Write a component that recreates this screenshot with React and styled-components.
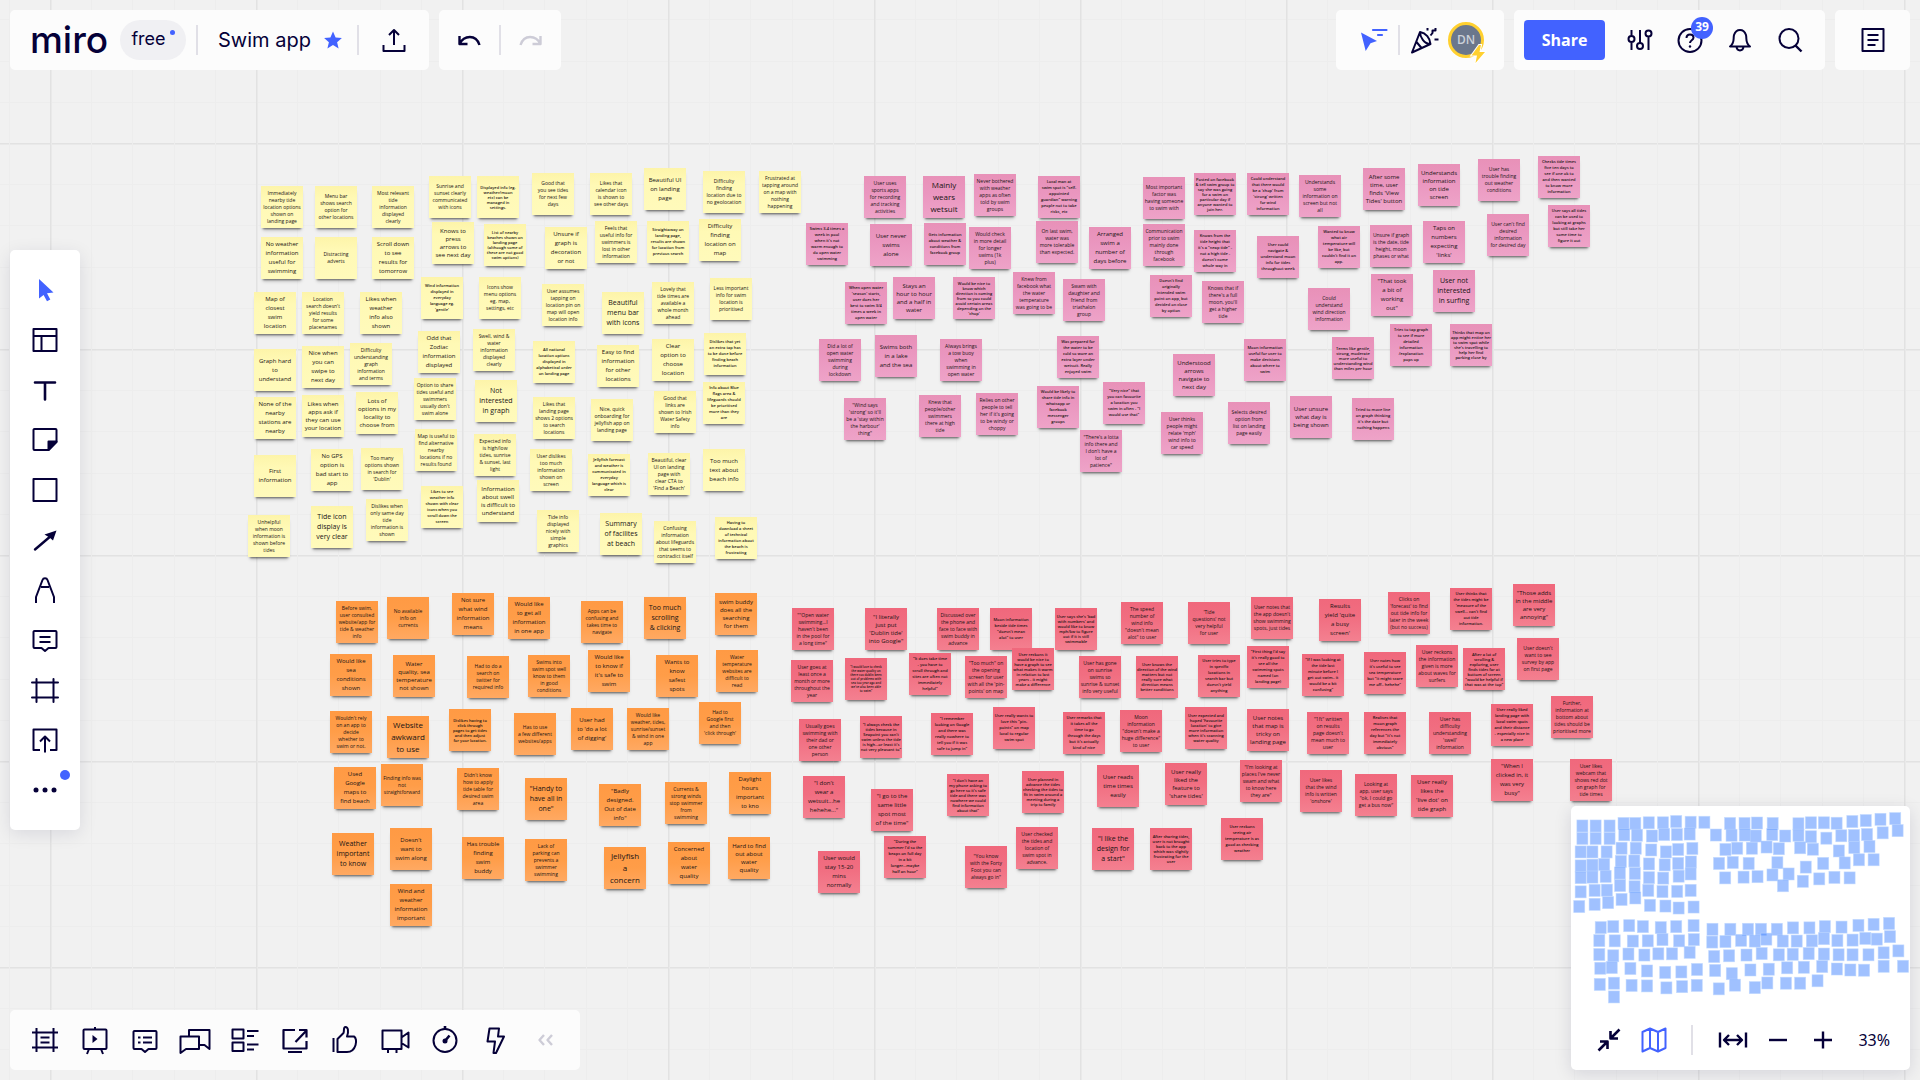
import React from "react";
import styled, { createGlobalStyle, css } from "styled-components";

const INK = "#050038";
const BLUE = "#4262ff";

const GlobalStyle = createGlobalStyle`
  * { box-sizing: border-box; }
  body {
    margin: 0;
    overflow: hidden;
    background: #f1f1f1;
    color: ${INK};
    font-family: "Open Sans", "Noto Sans", sans-serif;
  }
`;

/* ---------- board data: [x, y, text size, lines] ---------- */

const YELLOW = [
  [261, 186, "d", "Immediately|nearby tide|location options|shown on|landing page"],
  [315, 186, "d", "Menu bar|shows search|option for|other locations"],
  [372, 186, "d", "Most relevant|tide|information|displayed|clearly"],
  [429, 176, "d", "Sunrise and|sunset clearly|communicated|with icons"],
  [477, 176, "b", "Displayed info (eg.|weather/moon|etc) can be|managed in|settings."],
  [532, 173, "d", "Good that|you see tides|for next few|days"],
  [590, 173, "d", "Likes that|calendar icon|is shown to|see other days"],
  [644, 168, "f", "Beautiful UI|on landing|page"],
  [703, 171, "d", "Difficulty|finding|location due to|no geolocation"],
  [759, 171, "d", "Frustrated at|tapping around|on a map with|nothing|happening"],
  [261, 237, "f", "No weather|information|useful for|swimming"],
  [315, 237, "d", "Distracting|adverts"],
  [372, 237, "f", "Scroll down|to see|results for|tomorrow"],
  [432, 222, "e", "Knows to|press|arrows to|see next day"],
  [484, 224, "b", "List of nearby|beaches shown on|landing page|(although some of|these are not good|swim options)"],
  [545, 227, "f", "Unsure if|graph is|decoration|or not"],
  [595, 221, "d", "Feels that|useful info for|swimmers is|lost in other|information"],
  [647, 221, "c", "Straightaway on|landing page,|results are shown|for location from|previous search"],
  [699, 219, "f", "Difficulty|finding|location on|map"],
  [254, 292, "f", "Map of|closest|swim|location"],
  [302, 292, "d", "Location|search doesn't|yield results|for some|placenames"],
  [360, 292, "f", "Likes when|weather|info also|shown"],
  [421, 277, "c", "Wind information|displayed in|everyday|language eg.|'gentle'"],
  [479, 277, "d", "Icons show|menu options|eg. map,|settings, etc"],
  [542, 284, "d", "User assumes|tapping on|location pin on|map will open|location info"],
  [602, 292, "g", "Beautiful|menu bar|with icons"],
  [652, 282, "d", "Lovely that|tide times are|available a|whole month|ahead"],
  [710, 278, "d", "Less important|info for swim|location is|prioritised"],
  [254, 349, "f", "Graph hard|to|understand"],
  [302, 346, "f", "Nice when|you can|swipe to|next day"],
  [350, 343, "d", "Difficulty|understanding|graph|information|and terms"],
  [418, 331, "f", "Odd that|Zodiac|information|displayed"],
  [473, 329, "d", "Swell, wind &|water|information|displayed|clearly"],
  [533, 341, "c", "All national|location options|displayed in|alphabetical order|on landing page"],
  [597, 345, "f", "Easy to find|information|for other|locations"],
  [652, 339, "f", "Clear|option to|choose|location"],
  [704, 333, "c", "Dislikes that yet|an extra tap has|to be done before|finding beach|information"],
  [254, 397, "f", "None of the|nearby|stations are|nearby"],
  [302, 395, "e", "Likes when|apps ask if|they can use|your location"],
  [356, 392, "e", "Lots of|options in my|locality to|choose from"],
  [414, 378, "d", "Option to share|tides useful and|swimmers|usually don't|swim alone"],
  [475, 380, "g", "Not|interested|in graph"],
  [533, 397, "d", "Likes that|landing page|shows 2 options|to search|locations"],
  [591, 399, "d", "Nice, quick|onboarding for|jellyfish app on|landing page"],
  [654, 391, "d", "Good that|links are|shown to Irish|Water Safety|info"],
  [703, 382, "c", "Info about Blue|flags area &|lifeguards should|be prioritised|more than they|are"],
  [254, 455, "f", "First|information"],
  [311, 449, "f", "No GPS|option is|bad start to|app"],
  [361, 448, "d", "Too many|options shown|in search for|'Dublin'"],
  [415, 429, "d", "Map is useful to|find alternative|nearby|locations if no|results found"],
  [474, 434, "d", "Expected info|is high/low|tides, sunrise|& sunset, last|light"],
  [530, 449, "d", "User dislikes|too much|information|shown on|screen"],
  [588, 454, "c", "Jellyfish forecast|and weather is|communicated in|everyday|language which is|clear"],
  [648, 453, "d", "Beautiful, clear|UI on landing|page with|clear CTA to|'Find a Beach'"],
  [703, 449, "f", "Too much|text about|beach info"],
  [248, 515, "d", "Unhelpful|when moon|information is|shown before|tides"],
  [311, 506, "g", "Tide icon|display is|very clear"],
  [366, 499, "d", "Dislikes when|only same day|tide|information is|shown"],
  [421, 486, "c", "Likes to see|weather info|shown with clear|icons when you|scroll down the|screen"],
  [477, 480, "e", "Information|about swell|is difficult to|understand"],
  [537, 510, "d", "Tide info|displayed|nicely with|simple|graphics"],
  [600, 513, "g", "Summary|of facilites|at beach"],
  [654, 521, "d", "Confusing|information|about lifeguards|that seems to|contradict itself"],
  [715, 517, "c", "Having to|download a sheet|of technical|information about|the beach is|frustrating"],
];

const PINK = [
  [864, 176, "d", "User uses|sports apps|for recording|and tracking|activities"],
  [923, 176, "h", "Mainly|wears|wetsuit"],
  [974, 174, "d", "Never bothered|with weather|apps as often|told by swim|groups"],
  [1038, 176, "c", "Local man at|swim spot is \"self-|appointed|guardian\" warning|people not to take|risks, etc"],
  [1143, 177, "d", "Most important|factor was|having someone|to swim with"],
  [1194, 173, "b", "Posted on facebook|& tell swim group to|say she was going|for a swim on|particular day if|anyone wanted to|join her."],
  [1247, 173, "c", "Could understand|that there would|be a 'chop' from|'strong' written|for wind|information"],
  [1299, 175, "d", "Understands|some|information on|screen but not|all"],
  [1363, 168, "e", "After some|time, user|finds 'View|Tides' button"],
  [1418, 164, "e", "Understands|information|on tide|screen"],
  [1478, 159, "d", "User has|trouble finding|out weather|conditions"],
  [1538, 156, "c", "Checks tide times|five ten days to|see if one ok to|and then wanted|to know more|information"],
  [806, 223, "c", "Swims 3-4 times a|week in pool|when it's not|warm enough to|do open water|swimming"],
  [870, 224, "f", "User never|swims|alone"],
  [924, 223, "c", "Gets information|about weather &|conditions from|facebook group"],
  [969, 227, "d", "Would check|in more detail|for longer|swims (1k|plus)"],
  [1036, 221, "d", "On last swim,|water was|more tolerable|than expected."],
  [1089, 227, "f", "Arranged|swim a|number of|days before"],
  [1143, 224, "d", "Communication|prior to swim|mainly done|through|facebook"],
  [1194, 230, "c", "Knows from the|tide height that|it's a \"neap tide\" -|not a high tide -|doesn't come|whole way in"],
  [1257, 236, "c", "User could|navigate &|understand moon|info for tides|throughout week"],
  [1318, 226, "c", "Wanted to know|what air|temperature will|be like, but|couldn't find it on|app."],
  [1370, 225, "d", "Unsure if graph|is the date, tide|height, moon|phases or what"],
  [1423, 221, "f", "Taps on|numbers|expecting|'links'"],
  [1487, 214, "d", "User can't find|desired|information|for desired day"],
  [1548, 205, "c", "User says all tides|can be used to|looking at graphs|but still take her|some time to|figure it out"],
  [845, 282, "c", "When open water|'season' starts,|user does her|best to swim 3/4|times a week in|open water"],
  [893, 277, "e", "Stays an|hour to hour|and a half in|water"],
  [953, 277, "b", "Would be nice to|know which|direction is coming|from so you could|avoid certain areas|depending on the|'chop'"],
  [1013, 272, "d", "Knew from|facebook what|the water|temperature|was going to be"],
  [1063, 279, "d", "Swam with|daughter and|friend from|triathalon|group"],
  [1150, 275, "c", "Doesn't find|originally|intended swim|point on app, but|decided on close|by option"],
  [1202, 281, "d", "Knows that if|there's a full|moon, you'll|get a higher|tide"],
  [1308, 288, "d", "Could|understand|wind direction|information"],
  [1371, 274, "f", "\"That took|a bit of|working|out\""],
  [1433, 270, "g", "User not|interested|in surfing"],
  [819, 339, "d", "Did a lot of|open water|swimming|during|lockdown"],
  [875, 335, "f", "Swims both|in a lake|and the sea"],
  [940, 339, "d", "Always brings|a tow buoy|when|swimming in|open water"],
  [1057, 336, "c", "Was prepared for|the water to be|cold so wore an|extra layer under|wetsuit. Really|enjoyed swim"],
  [1173, 354, "e", "Understood|arrows|navigate to|next day"],
  [1244, 339, "c", "Moon information|useful for user to|make decisions|about where to|swim"],
  [1332, 337, "b", "Terms like gentle,|strong, moderate|more useful to|understanding wind|than miles per hour"],
  [1390, 324, "c", "Tries to tap graph|to see if more|detailed|information|/explanation|pops up"],
  [1450, 324, "b", "Thinks that map on|app might entice her|to swim spot while|she's travelling to|help her find|parking close by"],
  [844, 398, "d", "\"Wind says|'strong' so it'll|be a 'stay within|the harbour'|thing\""],
  [919, 395, "d", "Knew that|people/other|swimmers|there at high|tide"],
  [976, 393, "d", "Relies on other|people to tell|her if it's going|to be windy or|choppy"],
  [1037, 386, "c", "Would be likely to|share tide info in|whatsapp or|facebook|messenger|groups"],
  [1103, 382, "c", "\"Very nice\" that|you can favourite|a location you|swim in often - \"I|would use that\""],
  [1080, 430, "d", "\"There's a lotta|info there and|I don't have a|lot of|patience\""],
  [1161, 412, "d", "User thinks|people might|relate 'mph'|wind info to|car speed"],
  [1228, 402, "d", "Selects desired|option from|list on landing|page easily"],
  [1290, 396, "e", "User unsure|what day is|being shown"],
  [1352, 398, "c", "Tried to move line|on graph thinking|it's the date but|nothing happens"],
];

const ORANGE = [
  [336, 601, "d", "Before swim,|user consulted|website/app for|tide & weather|info"],
  [387, 597, "d", "No available|info on|currents"],
  [452, 593, "f", "Not sure|what wind|information|means"],
  [508, 597, "f", "Would like|to get all|information|in one app"],
  [581, 601, "d", "Apps can be|confusing and|takes time to|navigate"],
  [644, 597, "g", "Too much|scrolling|& clicking"],
  [715, 593, "e", "swim buddy|does all the|searching|for them"],
  [330, 654, "f", "Would like|sea|conditions|shown"],
  [393, 655, "e", "Water|quality, sea|temperature|not shown"],
  [467, 656, "d", "Had to do a|search on|twitter for|required info"],
  [528, 655, "d", "Swims into|swim spot well|know to them|in good|conditions"],
  [588, 650, "f", "Would like|to know if|it's safe to|swim"],
  [656, 655, "f", "Wants to|know|safest|spots"],
  [716, 650, "d", "Water|temperature|websites are|difficult to|read"],
  [330, 711, "d", "Wouldn't rely|on an app to|decide|whether to|swim or not."],
  [387, 716, "h", "Website|awkward|to use"],
  [449, 709, "b", "Dislikes having to|click through|pages to get tides|and then adjust|for your location."],
  [514, 713, "d", "Has to use|a few different|websites/apps"],
  [571, 708, "f", "User had|to 'do a lot|of digging'"],
  [627, 708, "d", "Would like|weather, tides,|sunrise/sunset|& wind in one|app"],
  [699, 702, "d", "Had to|Google first|and then|'click through'"],
  [334, 767, "f", "Used|Google|maps to|find beach"],
  [381, 764, "d", "Finding info was|not|straightforward"],
  [457, 768, "d", "Didn't know|how to apply|tide table for|desired swim|area"],
  [525, 778, "g", "\"Handy to|have all in|one\""],
  [599, 784, "f", "\"Badly|designed.|Out of date|info\""],
  [665, 782, "d", "Currents &|strong winds|stop swimmer|from|swimming"],
  [729, 772, "f", "Daylight|hours|important|to kno"],
  [332, 833, "g", "Weather|important|to know"],
  [390, 828, "f", "Doesn't|want to|swim along"],
  [462, 837, "f", "Has trouble|finding|swim|buddy"],
  [525, 839, "d", "Lack of|parking can|prevents a|swimmer|swimming"],
  [604, 847, "h", "Jellyfish|a|concern"],
  [668, 842, "f", "Concerned|about|water|quality"],
  [728, 837, "e", "Hard to find|out about|water|quality"],
  [390, 884, "f", "Wind and|weather|information|important"],
];

const RED = [
  [792, 608, "d", "\"\"Open water|swimming...I|haven't been|in the pool for|a long time\""],
  [865, 608, "e", "\"I literally|just put|'Dublin tide'|into Google\""],
  [937, 608, "d", "Discussed over|the phone and|face to face with|swim buddy in|advance"],
  [990, 608, "c", "Moon information|beside tide times|\"doesn't mean|alot\" to user"],
  [1055, 608, "b", "User says she's 'bad|with numbers' and|would like to know|mph/kw to figure|out if it is still|swimmable"],
  [1121, 602, "d", "The speed|number of|wind info|\"doesn't mean|alot\" to user"],
  [1188, 602, "d", "'Tide|questions' not|very helpful|for user"],
  [1251, 597, "d", "User notes that|the app doesn't|show swimming|spots, just tides"],
  [1319, 599, "f", "Results|yield 'quite|a busy|screen'"],
  [1388, 592, "d", "Clicks on|'forecast' to find|out tide info for|later in the week|(but no success)"],
  [1450, 588, "c", "User thinks that|the tides might be|'measure of the|swell… can't find|out tide|information."],
  [1513, 584, "e", "\"Those adds|in the middle|are very|annoying\""],
  [791, 660, "d", "User goes at|least once a|month or more|throughout the|year"],
  [845, 658, "a", "\"I would love to check|the water quality on|there cos dublin been|out of problems with|sea too year ago and|we've also been able|to swim\""],
  [909, 653, "c", "\"It does take time|- you have to|scroll through and|sites are often not|immediately|helpful\""],
  [965, 656, "d", "\"Too much\" on|the opening|screen for user|with all the 'pin-|points' on map"],
  [1012, 648, "b", "User reckons it|would be nice to|have a graph to see|what makes it warm|in relation to last|years - it might|make a difference"],
  [1079, 656, "d", "User has gone|on sunrise|swims so|sunrise & sunset|info very useful"],
  [1136, 656, "b", "User knows the|direction of the wind|matters but not|really sure what|direction means|better conditions"],
  [1198, 655, "c", "User tries to type|in specific|locations in|search bar but|doesn't yield|anything"],
  [1247, 646, "c", "\"First thing I'd say|it's really good to|see all the|swimming spots|named (on|landing page)"],
  [1302, 654, "c", "\"If I was looking at|the tide last|minute before I|get out swim.. it|would be a bit|confusing\""],
  [1364, 652, "c", "User notes how|it's useful to see|sea temperature|but \"it might scare|me off.. hehehe\""],
  [1416, 645, "d", "User reckons|the information|given is more|about waves for|surfers"],
  [1463, 648, "b", "After a lot of|scrolling &|exploring, user|finds tides far at|bottom of screen|\"would be helpful if|that was at the top\""],
  [1517, 638, "d", "User doesn't|want to see|survey by app|on first page"],
  [799, 719, "d", "Usually goes|swimming with|their dad or|one other|person"],
  [860, 716, "b", "\"I always check the|tides because in|Seapoint you can't|swim unless the tide|is high…or least it's|not very pleasant to\""],
  [931, 713, "c", "\"I remember|looking on Google|and there was|really nowhere to|tell you if it was|safe to jump in\""],
  [993, 707, "c", "User really wants to|love this \"pin-|points\" on map|local to regular|swim spot"],
  [1063, 712, "c", "User remarks that|it takes all the|time to go|through the days|but it's actually|kind of nice"],
  [1120, 710, "d", "Moon|information|\"doesn't make a|huge difference\"|to user"],
  [1185, 707, "b", "User expected and|hoped 'Favourite|location' to give|more information|when it's scanning|water quality"],
  [1247, 709, "e", "User notes|that map is|tricky on|landing page"],
  [1307, 712, "d", "\"1ft\" written|on results|page doesn't|mean much to|user"],
  [1364, 712, "c", "Realises that|moon graph|references the|day but \"it's not|immediately|obvious\""],
  [1429, 712, "d", "User has|difficulty|understanding|'swell'|information"],
  [1491, 704, "c", "User really liked|landing page with|local swim spots|and their distance|- especially nice in|a new place"],
  [1551, 696, "d", "Further,|information at|bottom about|tides should be|prioritised more"],
  [803, 776, "f", "\"I don't|wear a|wetsuit...he|hehehe...\""],
  [871, 789, "f", "\"I go to the|same little|spot most|of the time\""],
  [947, 774, "b", "\"I don't have an|my phone asking to|go here so it's safe|tide and there was|nowhere we could|find information|about that\""],
  [1022, 771, "b", "User planned in|advance the tides|checking the tides to|fit in swim around a|meeting during a|trip to family"],
  [1097, 765, "f", "User reads|time times|easily"],
  [1165, 763, "e", "User really|liked the|feature to|'share tides'"],
  [1240, 760, "d", "\"I'm looking at|places I've never|swam and what|to know here|they are\""],
  [1300, 770, "d", "User likes|that the wind|info is written|'onshore'"],
  [1355, 774, "d", "Looking at|app, user says|\"ok, I could go|get a bus now\""],
  [1411, 775, "f", "User really|likes the|'live dot' on|tide graph"],
  [1491, 759, "f", "\"When I|clicked in, it|was very|busy\""],
  [1570, 759, "d", "User likes|webcam that|shows red dot|on graph for|tide times"],
  [818, 851, "f", "User would|stay 15-20|mins|normally"],
  [884, 836, "c", "\"During the|summer I'd so the|beaps on full day|in a bit|longer…maybe|half an hour\""],
  [965, 846, "d", "\"You know|with the Forty|Foot you can|always go in\""],
  [1016, 827, "d", "User checked|the tides and|location of|swim spot in|advance."],
  [1092, 828, "g", "\"I like the|design for|a start\""],
  [1150, 828, "b", "After sharing tides,|user is not brought|back to the app|which was slightly|frustrating for the|user"],
  [1221, 818, "c", "User reckons|seeing air|temperature is as|good as checking|weather"],
];

const toNotes = (color, rows) =>
  rows.map(([x, y, size, text]) => ({ x, y, size, color, text: text.split("|").join("\n") }));

const NOTES = [
  ...toNotes("yellow", YELLOW),
  ...toNotes("pink", PINK),
  ...toNotes("orange", ORANGE),
  ...toNotes("red", RED),
];

/* ---------- board ---------- */

const TEXT_SIZES = {
  a: css`font-size: 3px; line-height: 4px; font-weight: 600;`,
  b: css`font-size: 4px; line-height: 5px; font-weight: 600;`,
  c: css`font-size: 4px; line-height: 6px; font-weight: 600;`,
  d: css`font-size: 5px; line-height: 7px;`,
  e: css`font-size: 6px; line-height: 8px;`,
  f: css`font-size: 6px; line-height: 9px;`,
  g: css`font-size: 7px; line-height: 10px;`,
  h: css`font-size: 8px; line-height: 12px;`,
};

const PAPER = {
  yellow: css`background: linear-gradient(#fdf4a9, #fff9b5 30%, #fffabb);`,
  pink: css`background: linear-gradient(#e891b8, #ea96bf 40%, #eea3c8);`,
  orange: css`background: linear-gradient(#ff9a44, #ff9d48 50%, #ffa962);`,
  red: css`background: linear-gradient(#f0687c, #f16e81 45%, #f48090);`,
};

const gridLines = (dir) => `linear-gradient(${dir},
  #e2e2e2 0 1px, #e9e9e9 1px 2px, transparent 2px 41px,
  #ededed 41px 42px, transparent 42px 82px,
  #ededed 82px 83px, transparent 83px 124px,
  #ededed 124px 125px, transparent 125px 165px,
  #ededed 165px 166px, transparent 166px)`;

const Board = styled.main`
  position: relative;
  height: 100vh;
  overflow: hidden;
  background-color: #f1f1f1;
  background-image: ${gridLines("to right")}, ${gridLines("to bottom")};
  background-size: 206px 206px;
  background-position: 50px 143px;
`;

const Sticky = styled.article`
  position: absolute;
  display: flex;
  align-items: center;
  justify-content: center;
  width: 42px;
  height: 42px;
  ${(p) => PAPER[p.$color]}
  box-shadow: 0 3px 2px -2px rgba(0, 0, 0, 0.5), 0 4px 4px -2px rgba(0, 0, 0, 0.22);
`;

const StickyText = styled.p`
  margin: 0;
  text-align: center;
  white-space: pre;
  color: #1a1414;
  ${(p) => TEXT_SIZES[p.$size]}
`;

/* ---------- floating chrome ---------- */

const Chrome = styled.div`
  position: absolute;
  inset: 0;
  display: grid;
  grid-template-columns: auto 1fr auto;
  grid-template-rows: 60px 1fr 60px;
  padding: 10px;
  pointer-events: none;
  & > * { pointer-events: auto; }
`;

const TopBar = styled.header`
  grid-column: 1 / -1;
  display: flex;
  gap: 10px;
`;

const Panel = styled.div`
  display: flex;
  align-items: center;
  height: 60px;
  padding: ${(p) => p.$pad || "0"};
  border-radius: 5px;
  background: #fcfcfc;
`;

const Spacer = styled.div`
  flex: 1;
`;

const Divider = styled.span`
  flex: none;
  width: 2px;
  height: 30px;
  background: #e1e0e7;
`;

const ToolButton = styled.button`
  position: relative;
  display: flex;
  flex: none;
  align-items: center;
  justify-content: center;
  width: ${(p) => p.$w || 50}px;
  height: 50px;
  padding: 0;
  border: 0;
  background: none;
  color: ${(p) => (p.$tone === "active" ? BLUE : p.$tone === "muted" ? "#cdccd7" : INK)};
  cursor: pointer;
`;

const Glyph = styled.svg`
  display: block;
  width: 26px;
  height: 26px;
  overflow: visible;
  fill: none;
  stroke: currentColor;
  stroke-width: 2;
  stroke-linejoin: round;
`;

const Logo = styled.a`
  width: 90px;
  color: ${INK};
  font: 500 37px/40px Inter, sans-serif;
  text-decoration: none;
`;

const Plan = styled.button`
  display: flex;
  justify-content: center;
  gap: 4px;
  width: 66px;
  height: 40px;
  margin-right: 10px;
  padding: 9px 0 0;
  border: 0;
  border-radius: 20px;
  background: #f0f0f3;
  color: ${INK};
  font: 400 18px/20px Inter, sans-serif;
`;

const PlanDot = styled.span`
  width: 5px;
  height: 5px;
  margin-top: 1px;
  border-radius: 50%;
  background: ${BLUE};
`;

const Title = styled.h1`
  flex: none;
  width: 105px;
  margin: 0 0 0 20px;
  font: 400 20px/24px Inter, sans-serif;
  white-space: nowrap;
`;

const StarButton = styled(ToolButton)`
  margin-right: 14px;
`;

const Avatar = styled.button`
  position: relative;
  width: 36px;
  height: 36px;
  padding: 0;
  border: 3px solid #ffd02f;
  border-radius: 50%;
  background: #6b778c;
  color: #ccd1d9;
  font: 600 12px/30px "Open Sans", sans-serif;
`;

const Bolt = styled.svg`
  position: absolute;
  right: -6px;
  bottom: -9px;
  width: 18px;
  height: 20px;
  fill: #ffd02f;
  stroke: #fff;
  stroke-width: 2;
  paint-order: stroke;
`;

const ShareButton = styled.button`
  width: 81px;
  height: 40px;
  margin-right: 10px;
  border: 0;
  border-radius: 4px;
  background: ${BLUE};
  color: #fff;
  font: 700 16px/24px "Open Sans", sans-serif;
`;

const Badge = styled.span`
  position: absolute;
  top: 2px;
  left: 26px;
  width: 22px;
  height: 22px;
  border-radius: 50%;
  background: ${BLUE};
  color: #fff;
  font: 700 12px/20px "Open Sans", sans-serif;
  text-align: center;
`;

const SideBar = styled.nav`
  grid-column: 1;
  grid-row: 2;
  align-self: center;
  justify-self: start;
  display: flex;
  flex-direction: column;
  align-items: center;
  width: 70px;
  padding: 15px 0;
  border-radius: 5px;
  background: #fff;
  box-shadow: 0 4px 18px rgba(5, 0, 56, 0.1);
`;

const NewDot = styled.span`
  position: absolute;
  top: 5px;
  right: 0;
  width: 10px;
  height: 10px;
  margin-right: 5px;
  border-radius: 50%;
  background: ${BLUE};
`;

const BottomBar = styled(Panel).attrs({ as: "nav" })`
  grid-column: 1 / 3;
  grid-row: 3;
  justify-self: start;
`;

const MapPanel = styled.aside`
  grid-column: 3;
  grid-row: 2 / 4;
  align-self: end;
  width: 339px;
  border-radius: 5px;
  background: #fff;
  box-shadow: 0 4px 18px rgba(5, 0, 56, 0.12);
`;

const MiniMap = styled.svg`
  display: block;
  width: 100%;
  height: 210px;
  fill: rgba(66, 132, 255, 0.5);
  stroke: rgba(190, 215, 255, 0.7);
  stroke-width: 3;
`;

const MapControls = styled.div`
  display: flex;
  align-items: center;
  height: 54px;
  padding: 0 20px 6px 15px;
`;

const MapDivider = styled(Divider)`
  margin: 0 17px 0 15px;
`;

const ZoomLevel = styled.button`
  flex: 1;
  padding: 0;
  border: 0;
  background: none;
  color: ${INK};
  font: 400 16px/24px "Noto Sans", sans-serif;
  text-align: right;
`;

/* ---------- icon drawings, 26 x 26 ---------- */

const ICONS = {
  star: <path fill="currentColor" stroke="none" d="M13 4.5l2.6 5.9 6.3.6-4.8 4.2 1.5 6.3-5.6-3.4-5.6 3.4 1.5-6.3L4.1 11l6.3-.6z" />,
  export: <path d="M13 18V3M8 8l5-5 5 5M2.5 18v6h21v-6" />,
  undo: <path d="M3.5 9v8h8M3.5 17C8 8 20 7 23.5 18" strokeWidth="2.4" />,
  redo: <path d="M22.5 9v8h-8M22.5 17C18 8 6 7 2.5 18" strokeWidth="2.4" />,
  collab: (
    <>
      <path fill="currentColor" stroke="none" d="M0 5.5L16 14l-6.5 2.2L4.7 24z" />
      <path d="M12 3h13.5M17 8h4" strokeWidth="2.2" strokeLinecap="round" />
    </>
  ),
  party: (
    <>
      <path d="M9 5L1 25.5 19.5 17C19 11 15 6 9 5zM9 5c0 5 4 12 10.5 12M5.5 15l5 6" />
      <path d="M16.5 1v2.5M19.5 8.500l2-2.500V3.500h3V1M23.5 12.500h4" />
    </>
  ),
  sliders: (
    <path d="M4.5 3v6M4.5 15v8M13 3v12.500M13 21.500V23M21.500 10v13M4.500 9a3 3 0 100 6 3 3 0 000-6zM13 16a3 3 0 100 6 3 3 0 000-6zM21.500 3.500a3 3 0 100 6 3 3 0 000-6z" />
  ),
  help: (
    <>
      <circle cx="13" cy="13.5" r="11.5" />
      <path d="M9.500 11c0-5 7-4.500 7-.5 0 3-3.500 2.500-3.500 5.500" />
      <circle cx="13" cy="19.5" r="1.2" fill="currentColor" stroke="none" />
    </>
  ),
  bell: <path d="M3 19.500h20c-5-4-3-7-4-11.500-1-3-3-5-6-5S8 5 7 8C6 12.500 8 15.500 3 19.500zM9.500 20c.5 4.500 6.500 4.500 7 0" />,
  search: <><circle cx="12" cy="11.5" r="9.5" /><path d="M18.500 18.500l6 6" strokeWidth="2.4" /></>,
  page: <path d="M2.500 2h21v22h-21zM7.500 8h11M7.500 13h11M7.500 18h8" />,
  cursor: <path fill="currentColor" stroke="none" d="M7 2l14.500 13.500-6.500.7 3.300 6.300-3.300 1.800-3.400-6.300L7 21.500z" />,
  template: <path d="M1.500 2h23v22h-23zM1.500 9h23M9.500 9v15" />,
  text: <path d="M3 5.500h20M13 5.500V22.500" strokeWidth="2.6" strokeLinecap="round" />,
  sticky: (
    <>
      <path d="M2.500 2h21a1 1 0 011 1v12l-8 8h-14a1 1 0 01-1-1V3a1 1 0 011-1z" />
      <path fill="currentColor" d="M24.500 14.500h-8v8.500z" />
    </>
  ),
  rect: <path d="M1.500 2h23v22h-23z" />,
  arrow: (
    <>
      <path d="M3 22.500L20 8" strokeLinecap="round" strokeWidth="2.4" />
      <path fill="currentColor" stroke="none" d="M24.500 3.500l-3.500 10-3.500-3-5-3z" />
    </>
  ),
  pen: <path d="M4 26v-6L10.500 3c.8-2.200 4.200-2.200 5 0L22 20v6M9 10h8" />,
  comment: <path d="M2.500 4h21a1 1 0 011 1v15a1 1 0 01-1 1h-7L13 24l-3.500-3h-7a1 1 0 01-1-1V5a1 1 0 011-1zM7.500 10h11M7.500 15h11" />,
  frame: <path d="M4.500 2v23M21.500 2v23M0 5.500h26M0 20.500h26" strokeLinecap="round" />,
  upload: <path d="M8 23H1.500V2.500h23V23H18M13 25.500V10.500M8 14.500l5-5 5 5" />,
  dots: (
    <g fill="currentColor" stroke="none">
      <circle cx="4" cy="13" r="2.5" />
      <circle cx="13" cy="13" r="2.5" />
      <circle cx="22" cy="13" r="2.5" />
    </g>
  ),
  frames: <path d="M4.500 1v24M21.500 1v24M0 5.500h26M0 20.500h26M8.500 10.500h9M8.500 15.500h9" />,
  present: (
    <>
      <path d="M2.500 2.500h21a1 1 0 011 1V21a1 1 0 01-1 1h-21a1 1 0 01-1-1V3.500a1 1 0 011-1zM13 0v2.500M7 22l-2 5M19 22l2 5" />
      <path fill="currentColor" stroke="none" d="M10.500 8v8l5-4z" />
    </>
  ),
  cards: (
    <path d="M2.500 4h21a1 1 0 011 1v16a1 1 0 01-1 1h-7L13 25l-3.500-3h-7a1 1 0 01-1-1V5a1 1 0 011-1zM6 10.500h2.500M11 10.500h9M6 15.500h2.500M11 15.500h9" />
  ),
  chat: <path d="M7 9.500V3h20.500v19l-5-4H17M-1.500 9.500H17V22H4l-5.500 4z" />,
  list: <path d="M.5 2.500h11v9H.5zM.5 15.500h11V24H.5zM15 4h11.500M15 9h7M15 17.500h11.500M15 22.500h7" />,
  shareScreen: <path d="M13 3H1.500v18.500h23V14M13.500 15L24.500 3.500M17 3h7.500v7.500M6 25h14" strokeWidth="2.2" />,
  like: <path d="M1.500 11v14M5.500 25V12l6-6c1-2.500-.5-6 2-6s3.500 4 1.500 9.500h7c4 2 2.500 15.500-7 15.500z" />,
  video: <path d="M.5 3.500h19v18.500H.5zM19.500 10.500l7-5v15l-7-4.500M6 22v4M14.500 22v4" />,
  timer: (
    <>
      <circle cx="13" cy="13.5" r="11.5" />
      <path d="M13 14l4.500-5.500M13 2v-3" strokeWidth="2.6" />
      <circle cx="13" cy="14" r="2.5" fill="currentColor" stroke="none" />
    </>
  ),
  lightning: <path d="M7.500 1.500H17l-1 8h6L14 26h-2.500l1.500-11.500H5.500z" />,
  chevrons: <path d="M12 8l-4.500 5 4.500 5M20 8l-4.500 5 4.500 5" strokeWidth="2.4" />,
  shrink: <path d="M23.500 2.500L15 11M14.500 4v7.500H22M2.500 23.500L11 15M4 14.500h7.500V22" strokeWidth="2.6" />,
  map: <path d="M1.500 5l7.500-3.500 8 3.500 7.500-3.500V21L17 24.500 9 21l-7.500 3.500zM9 1.500V21M17 5v19.500" />,
  fit: <path d="M0 5.500v15M26 5.500v15M4 13h18M9 8l-5 5 5 5M17 8l5 5-5 5" strokeWidth="2.4" />,
  minus: <path d="M4 13h18" strokeWidth="2.4" />,
  plus: <path d="M4 13h18M13 4.500v17" strokeWidth="2.4" />,
};

function Tool({ icon, label, tone, w, children }) {
  return (
    <ToolButton type="button" aria-label={label} $tone={tone} $w={w}>
      <Glyph viewBox="0 0 26 26" aria-hidden="true">{ICONS[icon]}</Glyph>
      {children}
    </ToolButton>
  );
}

const SIDE_TOOLS = [
  ["cursor", "Select"], ["template", "Templates"], ["text", "Text"], ["sticky", "Sticky note"],
  ["rect", "Shape"], ["arrow", "Connection line"], ["pen", "Pen"], ["comment", "Comment"],
  ["frame", "Frame"], ["upload", "Upload"], ["dots", "More tools"],
];

const BOTTOM_TOOLS = [
  ["frames", "Frames"], ["present", "Presentation"], ["cards", "Comments"], ["chat", "Chat"],
  ["list", "Cards"], ["shareScreen", "Screen sharing"], ["like", "Voting"], ["video", "Video chat"],
  ["timer", "Timer"], ["lightning", "Activities"], ["chevrons", "Collapse"],
];

export default function App() {
  return (
    <>
      <GlobalStyle />
      <Board>
        {NOTES.map((n) => (
          <Sticky key={`${n.x}-${n.y}`} $color={n.color} style={{ left: n.x, top: n.y }}>
            <StickyText $size={n.size}>{n.text}</StickyText>
          </Sticky>
        ))}

        <Chrome>
          <TopBar>
            <Panel $pad="0 0 0 20px">
              <Logo href="#home">miro</Logo>
              <Plan type="button">free<PlanDot /></Plan>
              <Divider />
              <Title>Swim app</Title>
              <StarButton type="button" aria-label="Starred" $tone="active" $w={20}>
                <Glyph viewBox="0 0 26 26" aria-hidden="true">{ICONS.star}</Glyph>
              </StarButton>
              <Divider />
              <Tool icon="export" label="Export" w={70} />
            </Panel>
            <Panel>
              <Tool icon="undo" label="Undo" w={60} />
              <Divider />
              <Tool icon="redo" label="Redo" w={60} tone="muted" />
            </Panel>
            <Spacer />
            <Panel $pad="0 20px 0 14px">
              <Tool icon="collab" label="Collaborators' cursors" w={48} tone="active" />
              <Divider />
              <Tool icon="party" label="Reactions" w={48} />
              <Avatar type="button" aria-label="Profile DN">
                DN
                <Bolt viewBox="0 0 18 20" aria-hidden="true">
                  <path d="M10 1L2.500 11.500H8L6.500 19 16 8h-5.500L12 1z" />
                </Bolt>
              </Avatar>
            </Panel>
            <Panel $pad="0 10px">
              <ShareButton type="button">Share</ShareButton>
              <Tool icon="sliders" label="Settings" />
              <Tool icon="help" label="Help"><Badge>39</Badge></Tool>
              <Tool icon="bell" label="Notifications" />
              <Tool icon="search" label="Search" />
            </Panel>
            <Panel>
              <Tool icon="page" label="Notes" w={75} />
            </Panel>
          </TopBar>

          <SideBar aria-label="Creation tools">
            {SIDE_TOOLS.map(([icon, label], i) => (
              <Tool key={icon} icon={icon} label={label} w={60} tone={i === 0 ? "active" : undefined}>
                {icon === "dots" && <NewDot />}
              </Tool>
            ))}
          </SideBar>

          <BottomBar $pad="0 10px" aria-label="Collaboration tools">
            {BOTTOM_TOOLS.map(([icon, label]) => (
              <Tool key={icon} icon={icon} label={label} tone={icon === "chevrons" ? "muted" : undefined} />
            ))}
          </BottomBar>

          <MapPanel aria-label="Board map">
            <MiniMap viewBox="237 129 1384 857" preserveAspectRatio="xMinYMin meet" aria-hidden="true">
              {NOTES.map((n) => (
                <rect key={`${n.x}-${n.y}`} x={n.x} y={n.y} width="45" height="49" />
              ))}
            </MiniMap>
            <MapControls>
              <Tool icon="shrink" label="Exit full view" w={45} />
              <Tool icon="map" label="Hide map" w={45} tone="active" />
              <MapDivider />
              <Tool icon="fit" label="Fit to screen" w={45} />
              <Tool icon="minus" label="Zoom out" w={45} />
              <Tool icon="plus" label="Zoom in" w={45} />
              <ZoomLevel type="button">33%</ZoomLevel>
            </MapControls>
          </MapPanel>
        </Chrome>
      </Board>
    </>
  );
}
